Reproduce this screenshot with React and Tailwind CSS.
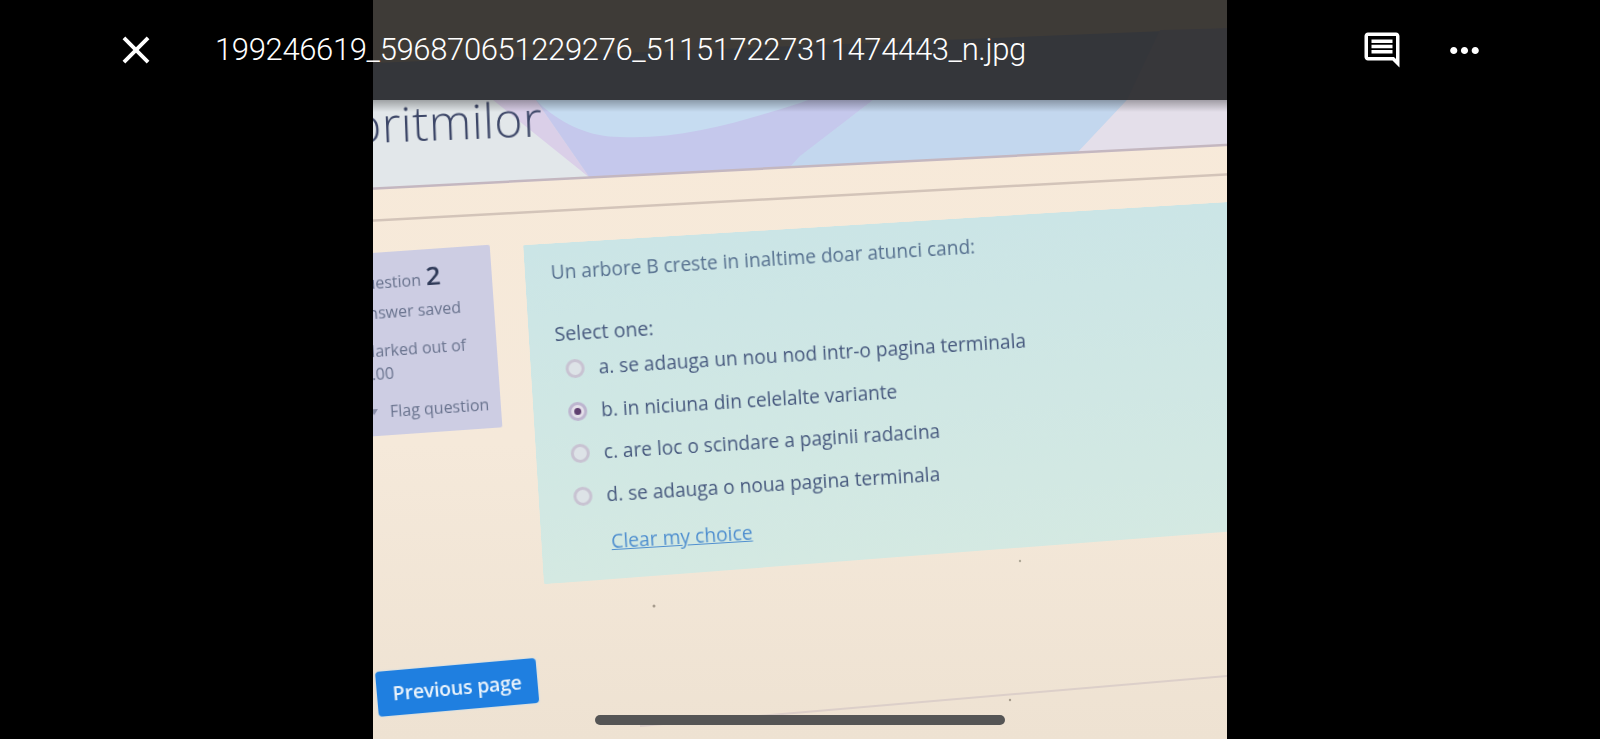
function Radio({ on }) {
  return (
    <span className={"flex h-[19px] w-[19px] shrink-0 items-center justify-center rounded-full border-[3px] blur-[0.6px] " + (on ? "border-[#bdb5cf] bg-[#e4e0ea]" : "border-[#c8c3d2] bg-[#dde3e7]")}>
      {on && <span className="h-[7px] w-[7px] rounded-full bg-[#5f3f70]" />}
    </span>
  );
}

function Option({ label, on }) {
  return (
    <div className="flex h-[42.7px] items-center gap-[14px] pl-[35px]">
      <Radio on={on} />
      <span className="whitespace-nowrap text-[19.1px] text-[#47597e]">{label}</span>
    </div>
  );
}

function PhotoBackground() {
  return (
    <svg className="absolute inset-0 h-full w-full" viewBox="373 0 854 739" preserveAspectRatio="none">
      <defs>
        <linearGradient id="peach" x1="0" y1="0" x2="0" y2="1">
          <stop offset="0" stopColor="#f8ead9" />
          <stop offset="0.6" stopColor="#f5e9da" />
          <stop offset="1" stopColor="#eee2d2" />
        </linearGradient>
      </defs>
      <rect x="373" y="0" width="854" height="739" fill="url(#peach)" />
      <polygon points="373,63 1240,28 1240,144 373,189" fill="#cfd6e6" />
      <polygon points="1160,30 1240,28 1240,144 1078,152 1127,100" fill="#dbd9e8" />
      <g className="blur-[0.7px]">
        <polygon points="360,100 500,100 590,178 360,190" fill="#e2e7ea" />
        <polygon points="493,100 536,100 590,178" fill="#dacfe8" />
        <path d="M536 100 L590 178 L790 167 L800 157 L873 100 Z" fill="#c5c8ec" />
        <path d="M536 100 L543 107 C565 125 590 137 620 137 C680 140 740 122 800 103 L808 100 Z" fill="#c6dcf1" />
        <polygon points="790,167 800,156 873,100 1127,100 1078,152" fill="#c3d7ee" />
        <polygon points="1127,100 1240,100 1240,144 1078,152" fill="#e4dfea" />
        <polygon points="360,188 1240,143 1240,145.5 360,190.5" fill="#c4b7c0" />
        <polygon points="360,220 1240,172.5 1240,175 360,222.5" fill="#d3c4b9" />
        <polygon points="640,725 1240,674 1240,676 640,727" fill="#dccfc9" />
      </g>
      <circle cx="1058" cy="229" r="1.5" fill="#8a9a9c" />
      <circle cx="654" cy="606" r="1.5" fill="#a79c8e" />
      <circle cx="1020" cy="561" r="1.2" fill="#b0a898" />
      <circle cx="1155" cy="307" r="1" fill="#a9bab8" />
      <circle cx="1010" cy="700" r="1.2" fill="#a79c8e" />
    </svg>
  );
}

export default function App() {
  return (
    <div className="relative flex h-[739px] w-full justify-center overflow-hidden bg-black font-['Open_Sans',sans-serif]">
      <div className="relative h-[739px] w-[854px] overflow-hidden">
        <PhotoBackground />

        <div className="absolute left-[-20px] top-[89px] -rotate-[2.2deg] whitespace-nowrap text-[48px] font-light leading-[66px] tracking-[0.5px] text-[#3d4768] blur-[0.4px]">
          oritmilor
        </div>

        <div className="absolute left-[-30px] top-[255px] h-[183px] w-[147px] origin-top-left -rotate-[4deg] rounded-[2px] bg-[#cdcde3] pl-[11px] pt-[12px] text-[16px] text-[#69738e] blur-[0.4px]">
          <div className="-ml-[3px] flex h-[28px] items-baseline gap-[5px] whitespace-nowrap">
            <span>Question</span>
            <span className="text-[26px] font-semibold leading-[28px] text-[#2f3a58]">2</span>
          </div>
          <div className="mt-[8px] h-[24px] whitespace-nowrap leading-[24px]">Answer saved</div>
          <div className="mt-[14px] h-[24px] whitespace-nowrap leading-[24px]">Marked out of</div>
          <div className="h-[23px] leading-[23px]">1.00</div>
          <div className="mt-[14px] flex h-[24px] items-center gap-[11px] whitespace-nowrap leading-[24px]">
            <svg width="10" height="10" viewBox="0 0 10 10" className="ml-[4px] shrink-0"><polygon points="1,2 9,2 5,8" fill="#8a8fa8" /></svg>
            <span>Flag question</span>
          </div>
        </div>

        <div className="absolute left-[150px] top-[245px] h-[340px] w-[820px] origin-top-left -rotate-[3.5deg] rounded-[2px] bg-gradient-to-b from-[#cbe5e6] to-[#d4e9e2] pl-[26px] pt-[15px] blur-[0.4px] [clip-path:polygon(0_0,100%_0,100%_calc(100%-13px),0_100%)]">
          <p className="h-[28px] whitespace-nowrap text-[19.1px] leading-[28px] text-[#56708f]">Un arbore B creste in inaltime doar atunci cand:</p>
          <p className="mt-[34px] h-[28px] whitespace-nowrap text-[19.6px] leading-[28px] text-[#47597e]">Select one:</p>
          <div className="-ml-[26px] flex flex-col">
            <Option label="a. se adauga un nou nod intr-o pagina terminala" />
            <Option label="b. in niciuna din celelalte variante" on />
            <Option label="c. are loc o scindare a paginii radacina" />
            <Option label="d. se adauga o noua pagina terminala" />
          </div>
          <a className="ml-[44px] mt-[11px] block h-[28px] w-fit whitespace-nowrap text-[19.3px] leading-[28px] text-[#4f8fcf] underline">Clear my choice</a>
        </div>

        <div className="absolute left-[2px] top-[672px] flex h-[45px] w-[161px] origin-top-left -rotate-[5deg] items-center justify-center rounded-[4px] bg-[#1f7fe0] text-[19.5px] font-semibold tracking-[-0.2px] text-[#eaf3fb] shadow-[0_0_2px_#a8d4f5] blur-[0.3px]">
          Previous page
        </div>

        <div className="absolute left-0 top-[100px] h-[12px] w-full bg-gradient-to-b from-black/30 to-transparent" />
      </div>

      <div className="absolute left-0 right-0 top-0 h-[100px]">
        <div className="absolute left-[373px] top-0 h-[100px] w-[854px] bg-black/75" />
        <div className="relative flex h-full items-center pl-[113px] pr-[114px] text-white">
          <svg width="46" height="46" viewBox="0 0 24 24" fill="#fff" className="shrink-0">
            <path d="M19 6.41 17.59 5 12 10.59 6.41 5 5 6.41 10.59 12 5 17.59 6.41 19 12 13.41 17.59 19 19 17.59 13.41 12z" />
          </svg>
          <div className="ml-[56px] flex-1 whitespace-nowrap font-['Roboto',sans-serif] text-[31px] font-light tracking-[-0.35px]">199246619_596870651229276_511517227311474443_n.jpg</div>
          <svg width="42" height="42" viewBox="0 0 24 24" fill="#fff" className="shrink-0">
            <path d="M21.99 4c0-1.1-.89-2-1.99-2H4c-1.1 0-2 .9-2 2v12c0 1.1.9 2 2 2h14l4 4-.01-18zM20 4v13.17L18.83 16H4V4h16zM6 12h12v2H6zm0-3h12v2H6zm0-3h12v2H6z" />
          </svg>
          <svg width="43" height="43" viewBox="0 0 24 24" fill="#fff" className="ml-[40px] shrink-0">
            <path d="M6 10c-1.1 0-2 .9-2 2s.9 2 2 2 2-.9 2-2-.9-2-2-2zm12 0c-1.1 0-2 .9-2 2s.9 2 2 2 2-.9 2-2-.9-2-2-2zm-6 0c-1.1 0-2 .9-2 2s.9 2 2 2 2-.9 2-2-.9-2-2-2z" />
          </svg>
        </div>
      </div>

      <div className="absolute bottom-[14px] left-1/2 h-[10px] w-[410px] -translate-x-1/2 rounded-full bg-[#555555]" />
    </div>
  );
}
